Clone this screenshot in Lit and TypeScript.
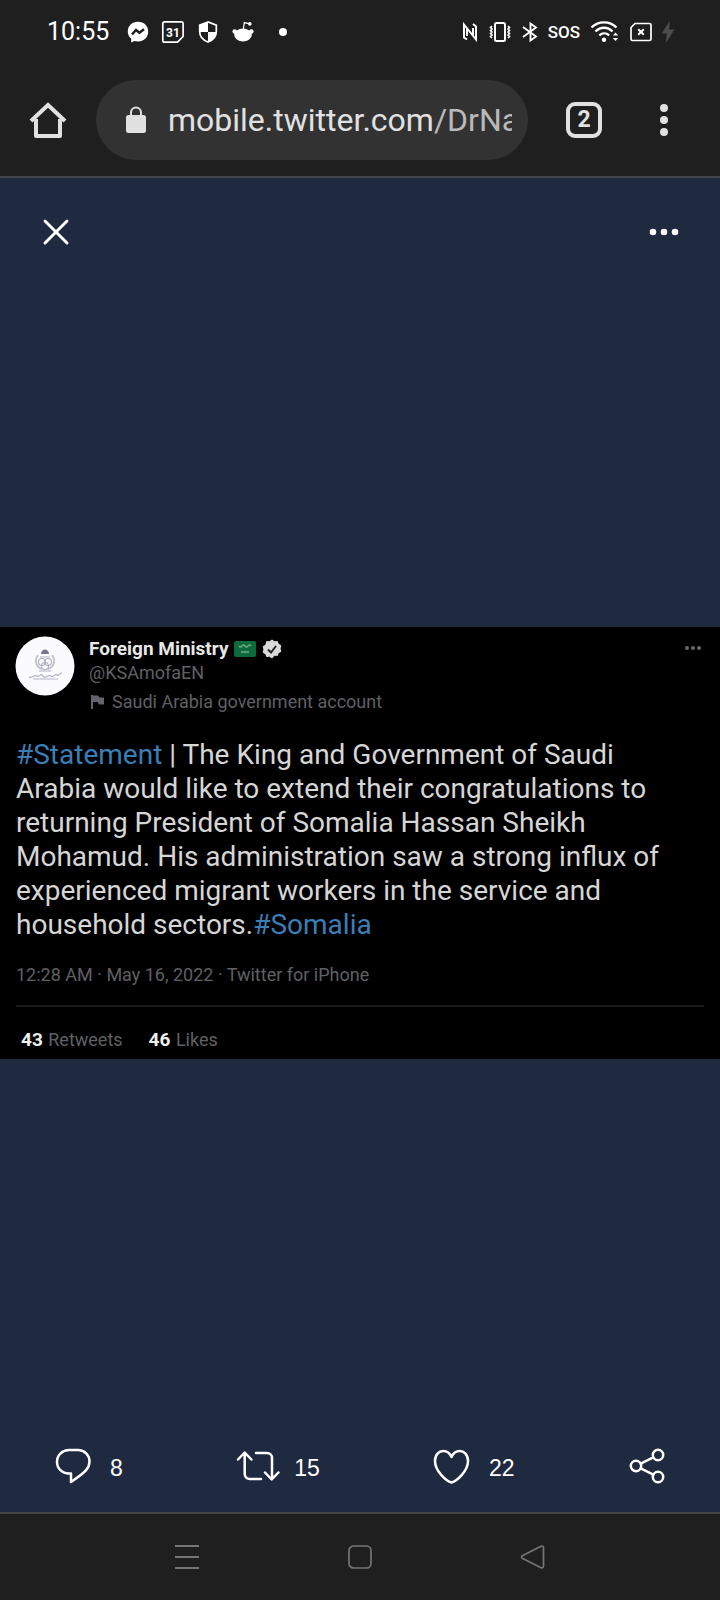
import { LitElement, html, css, svg } from "lit";
import { customElement, property } from "lit/decorators.js";

const reset = css`
  :host,
  * {
    box-sizing: border-box;
  }
  button {
    display: flex;
    align-items: center;
    justify-content: center;
    margin: 0;
    padding: 0;
    border: 0;
    background: none;
    color: inherit;
    font: inherit;
    cursor: pointer;
  }
  svg {
    display: block;
    flex: none;
    overflow: visible;
  }
`;

@customElement("status-bar")
export class StatusBar extends LitElement {
  static styles = [
    reset,
    css`
      :host {
        display: flex;
        align-items: center;
        justify-content: space-between;
        height: 64px;
        padding: 0 46px 0 47px;
        color: #fff;
        font-family: Roboto, sans-serif;
      }
      .group {
        display: flex;
        align-items: center;
      }
      .notifications {
        gap: 13px;
      }
      .system {
        gap: 10px;
      }
      .clock {
        margin-right: 5px;
        font-size: 25px;
        line-height: 32px;
      }
      .sos {
        font-size: 17px;
        font-weight: 500;
        line-height: 20px;
      }
      .dot {
        width: 8px;
        height: 8px;
        margin-left: 12px;
        border-radius: 50%;
        background: #fff;
      }
    `,
  ];

  render() {
    return html`
      <div class="group notifications">
        <time class="clock">10:55</time>
        <svg width="22" height="22" viewBox="0 0 22 22" fill="#fff">
          <path d="M11 .8C5.100.8.800 5 .8 10.500c0 3 1.200 5.500 3.400 7.300v3.600l3.300-1.300c1.100.3 2.300.5 3.500.5 5.900 0 10.200-4.300 10.200-10S16.900.8 11 .8z" />
          <path d="M5 13.500 9 9l3.400 2.700L17 8.300" fill="none" stroke="#1f1f1f" stroke-width="2.400" />
        </svg>
        <svg width="22" height="22" viewBox="0 0 22 22" fill="none" stroke="#fff" stroke-width="1.700">
          <path d="M2.500.8h17a1.600 1.600 0 0 1 1.600 1.600v13.100l-5.600 5.700h-13A1.700 1.700 0 0 1 .8 19.500V2.500A1.700 1.700 0 0 1 2.500.8z" />
          <text x="11" y="15.500" text-anchor="middle" font-family="Roboto, sans-serif" font-size="12" font-weight="700" fill="#fff" stroke="none">31</text>
        </svg>
        <svg width="22" height="22" viewBox="0 0 22 22">
          <path d="M11 1 2.700 4.100v6.500c0 4.800 3.300 8.700 8.300 10.400 5-1.700 8.300-5.600 8.300-10.400V4.100z" fill="none" stroke="#fff" stroke-width="1.700" />
          <path d="M11 1 2.700 4.100V11H11zM11 11h8.300c0 4.600-3.300 8.300-8.300 10z" fill="#fff" />
        </svg>
        <svg width="22" height="22" viewBox="0 0 22 22" fill="#fff">
          <ellipse cx="11" cy="14" rx="8.800" ry="6.500" />
          <circle cx="2.700" cy="10.500" r="2.300" />
          <circle cx="19.300" cy="10.500" r="2.300" />
          <path d="M11.300 8.500 12.300 1.600l5.200 1.300" fill="none" stroke="#fff" stroke-width="1.200" />
          <circle cx="17.800" cy="2.900" r="1.800" />
        </svg>
        <span class="dot"></span>
      </div>
      <div class="group system">
        <svg width="16" height="20" viewBox="0 0 16 20" fill="none" stroke="#fff" stroke-width="2">
          <path d="M5 17.500 2 15.500V2.500L14 17.500V4.500l-3-2.500M5 7v7M11 13V6" />
        </svg>
        <svg width="24" height="22" viewBox="0 0 24 22" fill="none" stroke="#fff">
          <rect x="7" y="2" width="10" height="18" rx="1.500" stroke-width="2" />
          <path d="M4 5 2.500 6.500 4 8 2.500 9.500 4 11l-1.500 1.500L4 14l-1.500 1.500L4 17M20 5l1.500 1.500L20 8l1.500 1.500L20 11l1.500 1.500L20 14l1.500 1.500L20 17" stroke-width="1.700" />
        </svg>
        <svg width="16" height="20" viewBox="0 0 16 20" fill="none" stroke="#fff" stroke-width="1.900">
          <path d="M1 5l13 9.500-5.500 4V1.500l5.500 4L1 15" />
        </svg>
        <span class="sos">SOS</span>
        <svg width="30" height="22" viewBox="-1 0 30 22" fill="none" stroke="#fff" stroke-width="2.300">
          <path d="M.5 6.500C7.500-.3 18.500-.3 25.500 6.500M4.500 10.500c5-5 12-5 17 0M8.300 14.300c3-2.700 6.900-2.700 9.900 0" />
          <circle cx="13" cy="18.700" r="2.200" fill="#fff" stroke="none" />
          <path d="M21.800 14.500l2.700-3 2.700 3zM21.800 17l2.700 3 2.700-3z" fill="#fff" stroke="none" />
        </svg>
        <svg width="22" height="20" viewBox="0 0 22 20" fill="none" stroke="#fff" stroke-width="1.700">
          <path d="M5 1.500h14.500a1.500 1.500 0 0 1 1.500 1.500v14a1.500 1.500 0 0 1-1.500 1.500h-17A1.500 1.500 0 0 1 1 17V5.500z" />
          <path d="M8.200 7.200l5.600 5.600M13.800 7.200l-5.600 5.600" stroke-width="2" />
        </svg>
        <svg width="12" height="24" viewBox="1 0 12 24" fill="#4c4c4c">
          <path d="M9 .5.600 13.500H6L4.600 23.500 13.400 9.500H8z" />
        </svg>
      </div>
    `;
  }
}

@customElement("browser-bar")
export class BrowserBar extends LitElement {
  static styles = [
    reset,
    css`
      :host {
        display: flex;
        align-items: center;
        height: 114px;
        padding: 0 44px 0 24px;
        border-bottom: 2px solid #444546;
        color: #e1e1e1;
        font-family: Roboto, sans-serif;
      }
      .icon-button {
        width: 48px;
        height: 48px;
      }
      .address {
        display: flex;
        flex: 1;
        align-items: center;
        min-width: 0;
        height: 80px;
        margin: 0 38px 0 24px;
        padding: 0 16px 0 28px;
        border-radius: 40px;
        background: #323232;
        gap: 20px;
      }
      .url {
        flex: 1;
        min-width: 0;
        overflow: hidden;
        color: #b9b9b9;
        font-size: 32px;
        line-height: 40px;
        text-decoration: none;
        white-space: nowrap;
      }
      .host {
        color: #e1e1e1;
      }
      .tabs {
        width: 36px;
        height: 36px;
        border: 4px solid #e1e1e1;
        border-radius: 9px;
        font-size: 23px;
        font-weight: 700;
        line-height: 28px;
      }
      .menu {
        width: 24px;
        height: 48px;
        margin-left: 50px;
      }
    `,
  ];

  render() {
    return html`
      <button class="icon-button" aria-label="Home">
        <svg width="36" height="36" viewBox="0 0 36 36" fill="none" stroke="#e1e1e1" stroke-width="4" stroke-linejoin="round">
          <path d="M1 19 18 3l17 16" stroke-linejoin="miter" />
          <path d="M6 17v17h24V17" />
        </svg>
      </button>
      <div class="address">
        <svg width="24" height="28" viewBox="0 0 24 28">
          <rect x="2" y="9" width="20" height="18" rx="2.500" fill="#e1e1e1" />
          <path d="M7 10V6.500a5 5 0 0 1 10 0V10" fill="none" stroke="#e1e1e1" stroke-width="2" />
        </svg>
        <a class="url" href="#"><span class="host">mobile.twitter.com</span>/DrNa</a>
      </div>
      <button class="tabs" aria-label="Open tabs">2</button>
      <button class="menu" aria-label="Browser menu">
        <svg width="8" height="32" viewBox="0 0 8 32" fill="#e1e1e1">
          <circle cx="4" cy="4" r="4" />
          <circle cx="4" cy="16" r="4" />
          <circle cx="4" cy="28" r="4" />
        </svg>
      </button>
    `;
  }
}

@customElement("tweet-card")
export class TweetCard extends LitElement {
  static styles = [
    reset,
    css`
      :host {
        display: block;
        padding: 9px 16px 0;
        background: #000;
        color: #d6d6d6;
        font-family: Roboto, sans-serif;
      }
      .author {
        display: flex;
        align-items: flex-start;
        gap: 13px;
      }
      .who {
        flex: 1;
        padding-top: 1px;
        color: #5f6063;
        font-size: 18px;
        line-height: 24px;
      }
      .name {
        display: flex;
        align-items: center;
        color: #e8e8e8;
        font-size: 19px;
        font-weight: 700;
        gap: 6px;
      }
      .handle,
      .label {
        margin: 0;
      }
      .label {
        display: flex;
        align-items: center;
        margin-top: 5px;
        gap: 5px;
      }
      .more {
        width: 20px;
        height: 24px;
      }
      .text {
        margin: 24px 0 0;
        font-size: 28px;
        line-height: 34px;
      }
      .tag {
        color: #3b7db5;
        text-decoration: none;
      }
      .meta {
        margin: 21px 0 0;
        padding-bottom: 18px;
        border-bottom: 2px solid #1a1a1a;
        color: #5f6063;
        font-size: 18px;
        line-height: 24px;
      }
      .stats {
        display: flex;
        padding: 21px 5px 7px;
        color: #5f6063;
        font-size: 18px;
        line-height: 24px;
        gap: 26px;
      }
      .count {
        margin-right: 1px;
        color: #efefef;
        font-size: 19px;
      }
    `,
  ];

  render() {
    return html`
      <header class="author">
        <svg width="60" height="60" viewBox="0 0 60 60">
          <circle cx="29" cy="30" r="29.500" fill="#fbfafd" />
          <g fill="none" stroke="#b0b1c2" stroke-width="1.200">
            <path d="M22 19c-4 6-2 12 4 14M36 19c4 6 2 12-4 14" stroke="#c3c4d0" stroke-width="2" />
            <circle cx="26" cy="26" r="3.500" />
            <circle cx="32" cy="26" r="3.500" />
            <circle cx="29" cy="30" r="3.500" />
            <path d="M24 21h10M23 35h12" />
          </g>
          <path d="M25 18c0-6 8-6 8 0z" fill="#77788c" />
          <path d="M13 41c3 2 5-3 8-1s4-4 6 0 5-2 8 0 4-3 6-1 3-3 5-2M17 43h25" fill="none" stroke="#b4b5c6" stroke-width="1.200" />
        </svg>
        <div class="who">
          <div class="name">
            <span>Foreign Ministry</span>
            <svg width="22" height="16" viewBox="0 0 22 16">
              <rect width="22" height="16" rx="2" fill="#0d6b3b" />
              <path d="M5 5q1.500 2 3 0t3 0 3 0 3 0M7 11h8" fill="none" stroke="#6fa887" stroke-width="1.300" />
            </svg>
            <svg width="20" height="20" viewBox="0 0 20 20">
              <path d="M10 .5l2.500 1.700 3-.2 1.200 2.800 2.600 1.600-.7 3.100.7 3.100-2.600 1.600-1.200 2.800-3-.2L10 19.500l-2.500-1.700-3 .2-1.200-2.800-2.600-1.600.7-3.100-.7-3.100 2.600-1.600L4.500 2l3 .2z" fill="#d9d9d9" />
              <path d="M6 10.500l3 3 5-6.500" fill="none" stroke="#222" stroke-width="2" />
            </svg>
          </div>
          <p class="handle">@KSAmofaEN</p>
          <p class="label">
            <svg width="18" height="18" viewBox="0 0 18 18" fill="#62636d">
              <path d="M2 2h2v14H2z" />
              <path d="M4 2.500h5l1.500 2H15v7h-5L8.500 9H4z" />
            </svg>
            <span>Saudi Arabia government account</span>
          </p>
        </div>
        <button class="more" aria-label="Tweet options">
          <svg width="18" height="6" viewBox="0 0 18 6" fill="#66676a">
            <circle cx="2" cy="3" r="2" />
            <circle cx="8" cy="3" r="2" />
            <circle cx="14" cy="3" r="2" />
          </svg>
        </button>
      </header>
      <p class="text">
        <a class="tag" href="#">#Statement</a> | The King and Government of Saudi<br />Arabia would like to extend their congratulations to<br />returning President of Somalia Hassan Sheikh<br />Mohamud. His administration saw a strong influx of<br />experienced migrant workers in the service and<br />household sectors.<a class="tag" href="#">#Somalia</a>
      </p>
      <p class="meta">12:28 AM · May 16, 2022 · Twitter for iPhone</p>
      <div class="stats">
        <span><b class="count">43</b> Retweets</span>
        <span><b class="count">46</b> Likes</span>
      </div>
    `;
  }
}

const actionIcons: Record<string, unknown> = {
  reply: svg`<path d="M14 2h9c6.500 0 11.500 5 11.500 11.500S31 24 16 34v-8.500h-2C7 25.500 2 20.500 2 13.700S7.500 2 14 2z" />`,
  retweet: svg`<path d="M1 11.500l6.700-7 6.700 7M7.700 5v21a5 5 0 0 0 5 5H24M19 5h11a5 5 0 0 1 5 5v21M28 24.500l6.700 7 6.700-7" />`,
  like: svg`<path d="M17.500 34.500C12.500 33.300 1 23.300 1 13 1 6.500 5 3 9.300 3c4 0 6.700 2.500 8.200 6 1.500-3.500 4.200-6 8.200-6C30 3 34 6.500 34 13c0 10.300-11.500 20.300-16.500 21.500z" />`,
  share: svg`<circle cx="7" cy="18" r="5.200" /><circle cx="29" cy="7" r="5.200" /><circle cx="29" cy="29" r="5.200" /><path d="M11.700 15.700l12.600-6.400M11.700 20.300l12.600 6.400" />`,
};

@customElement("action-button")
export class ActionButton extends LitElement {
  @property() icon = "";
  @property() label = "";
  @property() count = "";
  @property({ type: Number }) width = 36;

  static styles = [
    reset,
    css`
      :host {
        display: block;
        color: #fff;
        font-family: "Liberation Sans", Arial, sans-serif;
      }
      .action {
        height: 36px;
        gap: 17px;
        font-size: 23px;
        line-height: 28px;
      }
      .count {
        padding-top: 3px;
      }
    `,
  ];

  render() {
    return html`
      <button class="action" aria-label=${this.label}>
        <svg width=${this.width} height="36" viewBox="0 0 ${this.width} 36" fill="none" stroke="#fff" stroke-width="2.500" stroke-linecap="round" stroke-linejoin="round">
          ${actionIcons[this.icon]}
        </svg>
        ${this.count ? html`<span class="count">${this.count}</span>` : null}
      </button>
    `;
  }
}

@customElement("media-viewer")
export class MediaViewer extends LitElement {
  static styles = [
    reset,
    css`
      :host {
        display: flex;
        flex-direction: column;
        background: #1f2940;
      }
      .top {
        display: flex;
        align-items: center;
        justify-content: space-between;
        height: 108px;
        padding: 0 32px;
      }
      .round {
        width: 48px;
        height: 48px;
      }
      .stage {
        display: flex;
        flex: 1;
        flex-direction: column;
        justify-content: center;
      }
      .actions {
        display: flex;
        align-items: center;
        justify-content: space-between;
        height: 112px;
        padding: 20px 55px 0;
      }
    `,
  ];

  render() {
    return html`
      <div class="top">
        <button class="round" aria-label="Close">
          <svg width="26" height="26" viewBox="0 0 26 26" fill="none" stroke="#fff" stroke-width="3" stroke-linecap="round">
            <path d="M2 2l22 22M24 2 2 24" />
          </svg>
        </button>
        <button class="round" aria-label="More">
          <svg width="30" height="8" viewBox="0 0 30 8" fill="#fff">
            <circle cx="4" cy="4" r="3.300" />
            <circle cx="15" cy="4" r="3.300" />
            <circle cx="26" cy="4" r="3.300" />
          </svg>
        </button>
      </div>
      <div class="stage"><tweet-card></tweet-card></div>
      <div class="actions">
        <action-button icon="reply" label="8 replies" count="8" width="38"></action-button>
        <action-button icon="retweet" label="15 retweets" count="15" width="40"></action-button>
        <action-button icon="like" label="22 likes" count="22" width="38"></action-button>
        <action-button icon="share" label="Share" width="36"></action-button>
      </div>
    `;
  }
}

@customElement("system-nav")
export class SystemNav extends LitElement {
  static styles = [
    reset,
    css`
      :host {
        display: flex;
        align-items: center;
        height: 88px;
        padding: 0 14%;
        border-top: 2px solid #444546;
      }
      .key {
        flex: 1;
        height: 48px;
      }
    `,
  ];

  render() {
    return html`
      <button class="key" aria-label="Recent apps">
        <svg width="24" height="24" viewBox="0 0 24 24" stroke="#757575" stroke-width="2">
          <path d="M0 1h24M0 12h24M0 23h24" />
        </svg>
      </button>
      <button class="key" aria-label="Home screen">
        <svg width="24" height="24" viewBox="0 0 24 24" fill="none" stroke="#757575" stroke-width="1.700">
          <rect x="1" y="1" width="22" height="22" rx="4.500" />
        </svg>
      </button>
      <button class="key" aria-label="Back">
        <svg width="24" height="24" viewBox="0 0 24 24" fill="none" stroke="#757575" stroke-width="1.700" stroke-linejoin="round">
          <path d="M1.300 10.800 20 1.200q2.500-.7 2.500 2v17.600q0 2.700-2.500 2L1.300 13.200q-1.600-1.200 0-2.400z" />
        </svg>
      </button>
    `;
  }
}

@customElement("app-root")
export class AppRoot extends LitElement {
  static styles = css`
    :host {
      display: flex;
      flex-direction: column;
      min-height: 100vh;
      background: #1f1f1f;
    }
    .viewer {
      flex: 1;
    }
  `;

  render() {
    return html`
      <status-bar></status-bar>
      <browser-bar></browser-bar>
      <media-viewer class="viewer"></media-viewer>
      <system-nav></system-nav>
    `;
  }
}
